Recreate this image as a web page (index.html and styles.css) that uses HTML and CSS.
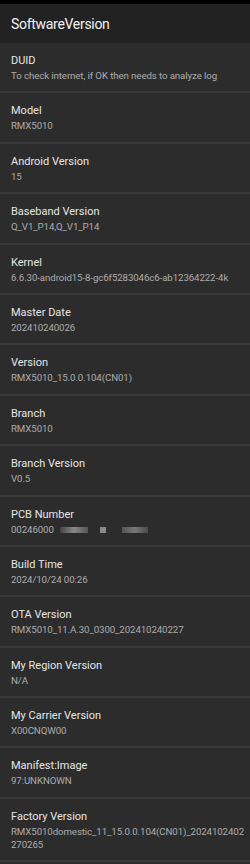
FILE: index.html
```html
<!DOCTYPE html>
<html lang="en">
<head>
    <meta charset="UTF-8">
    <meta name="viewport" content="width=device-width, initial-scale=1.0">
    <title>SoftwareVersion</title>
    <link rel="stylesheet" href="styles.css">
</head>
<body>
    <div class="status-bar"></div>
    <header class="title-bar">SoftwareVersion</header>
    <ul class="info-list">
        <li class="info-item">
            <div class="label">DUID</div>
            <div class="value">To check internet, if OK then needs to analyze log</div>
        </li>
        <li class="info-item">
            <div class="label">Model</div>
            <div class="value">RMX5010</div>
        </li>
        <li class="info-item">
            <div class="label">Android Version</div>
            <div class="value">15</div>
        </li>
        <li class="info-item">
            <div class="label">Baseband Version</div>
            <div class="value">Q_V1_P14,Q_V1_P14</div>
        </li>
        <li class="info-item">
            <div class="label">Kernel</div>
            <div class="value">6.6.30-android15-8-gc6f5283046c6-ab12364222-4k</div>
        </li>
        <li class="info-item">
            <div class="label">Master Date</div>
            <div class="value">202410240026</div>
        </li>
        <li class="info-item">
            <div class="label">Version</div>
            <div class="value">RMX5010_15.0.0.104(CN01)</div>
        </li>
        <li class="info-item">
            <div class="label">Branch</div>
            <div class="value">RMX5010</div>
        </li>
        <li class="info-item">
            <div class="label">Branch Version</div>
            <div class="value">V0.5</div>
        </li>
        <li class="info-item">
            <div class="label">PCB Number</div>
            <div class="value">00246000<span class="blur blur-a"></span><span class="blur blur-b"></span><span class="blur blur-c"></span></div>
        </li>
        <li class="info-item">
            <div class="label">Build Time</div>
            <div class="value">2024/10/24 00:26</div>
        </li>
        <li class="info-item">
            <div class="label">OTA Version</div>
            <div class="value">RMX5010_11.A.30_0300_202410240227</div>
        </li>
        <li class="info-item">
            <div class="label">My Region Version</div>
            <div class="value">N/A</div>
        </li>
        <li class="info-item">
            <div class="label">My Carrier Version</div>
            <div class="value">X00CNQW00</div>
        </li>
        <li class="info-item">
            <div class="label">Manifest:Image</div>
            <div class="value">97:UNKNOWN</div>
        </li>
        <li class="info-item">
            <div class="label">Factory Version</div>
            <div class="value">RMX5010domestic_11_15.0.0.104(CN01)_2024102402<br>270265</div>
        </li>
    </ul>
</body>
</html>
```

FILE: styles.css
```css
body {
    margin: 0;
    background-color: #2c2c2c;
    font-family: Roboto, "Noto Sans", sans-serif;
    color: #ececec;
}
.status-bar {
    height: 4px;
    background-color: #000;
}
.title-bar {
    height: 39px;
    line-height: 41px;
    padding: 0 11px;
    background-color: #222;
    font-size: 14px;
    letter-spacing: -0.3px;
    color: #f2f2f2;
}
.info-list {
    list-style: none;
    margin: 0;
    padding: 0;
}
.info-item {
    padding: 10px 11px 9.4px;
    border-bottom: 2px solid #3a3a3a;
    background-color: #2c2c2c;
}
.label {
    font-size: 11px;
    line-height: 15px;
    color: #e6e6e6;
}
.value {
    margin-top: 1px;
    font-size: 9.7px;
    line-height: 13px;
    letter-spacing: -0.1px;
    color: #adadad;
    white-space: nowrap;
}
.blur {
    display: inline-block;
    height: 6px;
    vertical-align: middle;
    background-color: #5a5a5a;
}
.blur-a {
    width: 28px;
    margin-left: 6px;
    background: linear-gradient(90deg, #444, #888 50%, #555);
}
.blur-b {
    width: 6px;
    margin-left: 12px;
    background-color: #8a8a8a;
}
.blur-c {
    width: 26px;
    margin-left: 16px;
    background: linear-gradient(90deg, #555, #777 50%, #4a4a4a);
}
```
